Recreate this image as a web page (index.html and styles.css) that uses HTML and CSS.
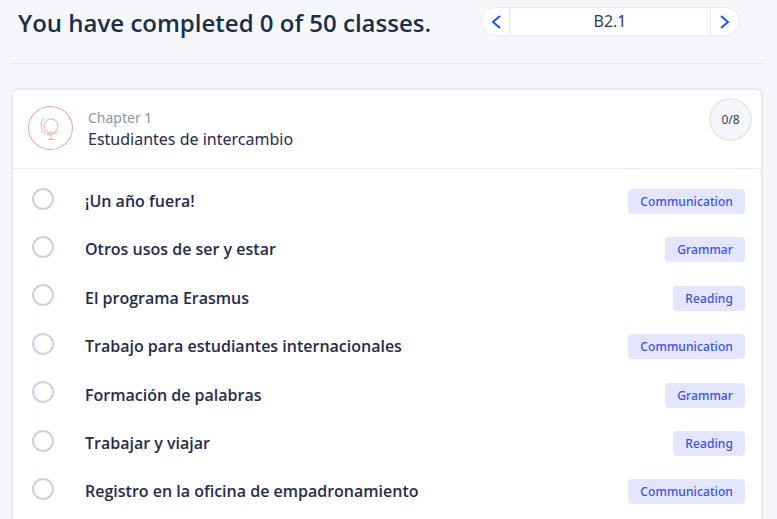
FILE: index.html
```html
<!DOCTYPE html>
<html lang="en">
<head>
  <meta charset="UTF-8" />
  <title>Course progress</title>
  <link rel="stylesheet" href="styles.css">
</head>
<body>
  <div class="top-bar">
    <h1>You have completed 0 of 50 classes.</h1>
    <div class="level-nav">
      <a class="level-arrow level-prev" href="#">
        <svg width="12" height="16" viewBox="0 0 12 16"><path d="M10 2 L3 8 L10 14" fill="none" stroke="#1a56f0" stroke-width="2"/></svg>
      </a>
      <span class="level-name">B2.1</span>
      <a class="level-arrow" href="#">
        <svg width="12" height="16" viewBox="0 0 12 16"><path d="M2 2 L9 8 L2 14" fill="none" stroke="#1a56f0" stroke-width="2"/></svg>
      </a>
    </div>
  </div>

  <div class="chapter">
    <div class="chapter-head">
      <div class="chapter-icon">
        <svg width="24" height="28" viewBox="0 0 24 28" fill="none" stroke="#eba99b" stroke-width="1">
          <circle cx="12" cy="12" r="7"/>
          <path d="M5 4.5 A10 10 0 0 0 2 11.5 A9 9 0 0 0 11 20.5 A9 9 0 0 0 18 18"/>
          <path d="M12 20.5 V25 M8.5 25.5 H15.5"/>
        </svg>
      </div>
      <div class="chapter-title">
        <span class="chapter-num">Chapter 1</span>
        <span class="chapter-name">Estudiantes de intercambio</span>
      </div>
      <div class="chapter-count">0/8</div>
    </div>

    <ul class="lessons">
      <li><span class="check"></span><span class="lesson-name">¡Un año fuera!</span><span class="tag">Communication</span></li>
      <li><span class="check"></span><span class="lesson-name">Otros usos de ser y estar</span><span class="tag">Grammar</span></li>
      <li><span class="check"></span><span class="lesson-name">El programa Erasmus</span><span class="tag">Reading</span></li>
      <li><span class="check"></span><span class="lesson-name">Trabajo para estudiantes internacionales</span><span class="tag">Communication</span></li>
      <li><span class="check"></span><span class="lesson-name">Formación de palabras</span><span class="tag">Grammar</span></li>
      <li><span class="check"></span><span class="lesson-name">Trabajar y viajar</span><span class="tag">Reading</span></li>
      <li><span class="check"></span><span class="lesson-name">Registro en la oficina de empadronamiento</span><span class="tag">Communication</span></li>
    </ul>
  </div>
</body>
</html>
```

FILE: styles.css
```css
html, body {
  height: 100%;
  overflow: hidden;
}
body {
  font-family: "Noto Sans", "Open Sans", sans-serif;
  background-color: #f6f7fa;
  margin: 0;
  padding: 0 14px 0 11px;
  color: #1c2c4c;
}
.top-bar {
  display: flex;
  align-items: flex-start;
  justify-content: space-between;
  height: 56px;
  border-bottom: 1px solid #e9eaf0;
  padding: 7px 23px 0 7px;
}
.top-bar h1 {
  margin: 0;
  font-family: "Open Sans", sans-serif;
  font-size: 24px;
  line-height: 31px;
  font-weight: 600;
  color: #1a2e50;
}
.level-nav {
  display: flex;
  width: 259px;
  height: 29px;
  box-sizing: border-box;
  background-color: #fff;
  border: 1px solid #e9eaf0;
  border-radius: 15px;
}
.level-arrow {
  display: flex;
  align-items: center;
  justify-content: center;
  width: 28px;
}
.level-prev {
  width: 27px;
}
.level-name {
  flex: 1;
  text-align: center;
  font-size: 16px;
  line-height: 26px;
  color: #2b3d63;
  border-left: 1px solid #e9eaf0;
  border-right: 1px solid #e9eaf0;
}
.chapter {
  margin-top: 24px;
  background-color: #fff;
  border: 2px solid #e9eaf0;
  border-bottom: none;
  border-radius: 6px 6px 0 0;
}
.chapter-head {
  display: flex;
  align-items: flex-start;
  height: 62px;
  border-bottom: 1px solid #e9eaf0;
  padding: 16px 9px 0 15px;
}
.chapter-icon {
  display: flex;
  align-items: center;
  justify-content: center;
  width: 43px;
  height: 42px;
  border: 1px solid #eba99b;
  border-radius: 50%;
}
.chapter-title {
  display: flex;
  flex-direction: column;
  margin-left: 15px;
  padding-top: 1px;
  flex: 1;
}
.chapter-num {
  font-size: 14px;
  line-height: 21px;
  color: #8d96a8;
}
.chapter-name {
  margin-top: 1px;
  font-size: 16px;
  line-height: 21px;
  color: #2a2a55;
}
.chapter-count {
  width: 43px;
  height: 43px;
  box-sizing: border-box;
  margin-top: -8px;
  border: 2px solid #e9eaf0;
  border-radius: 50%;
  background-color: #f6f7fa;
  font-size: 12px;
  line-height: 39px;
  text-align: center;
  color: #2b3d63;
}
.lessons {
  list-style: none;
  margin: 0;
  padding: 7.4px 16px 20px 19px;
}
.lessons li {
  display: flex;
  align-items: center;
  height: 48.4px;
}
.check {
  width: 22px;
  height: 22px;
  box-sizing: border-box;
  border: 2px solid #cfcfe6;
  border-radius: 50%;
  margin-top: -4px;
  background-color: #fff;
}
.lesson-name {
  flex: 1;
  margin-left: 31px;
  padding-top: 1px;
  font-family: "Open Sans", sans-serif;
  font-size: 16px;
  font-weight: 600;
  color: #252b50;
}
.tag {
  margin-top: 2px;
  padding: 0 12px;
  height: 25px;
  line-height: 25px;
  font-size: 12px;
  font-weight: 500;
  letter-spacing: 0.1px;
  color: #3b50f0;
  background-color: #e3e6fd;
  border-radius: 4px;
}
```
